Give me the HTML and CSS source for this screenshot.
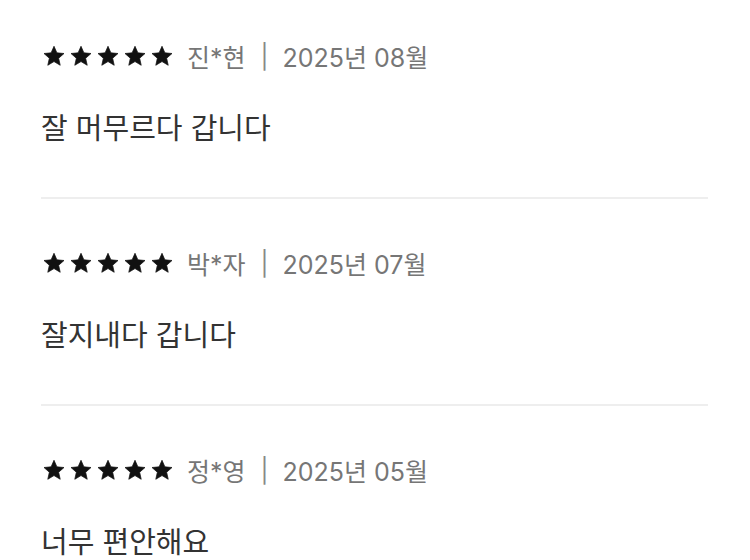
FILE: index.html
```html
<!DOCTYPE html>
<html lang="ko">
<head>
  <meta charset="UTF-8">
  <title>리뷰</title>
  <link rel="stylesheet" href="styles.css">
</head>
<body>
  <svg width="0" height="0" class="defs">
    <symbol id="star" viewBox="1.2 1.2 21.6 21.6">
      <path d="M12 1.5l3.1 7.1 7.7.7-5.8 5.1 1.7 7.6L12 18l-6.7 4 1.7-7.6-5.8-5.1 7.7-.7z" stroke="#111" stroke-width="0.8" stroke-linejoin="round"/>
    </symbol>
  </svg>

  <div class="reviews">
    <div class="review">
      <div class="meta">
        <span class="stars">
          <svg class="star"><use href="#star"/></svg>
          <svg class="star"><use href="#star"/></svg>
          <svg class="star"><use href="#star"/></svg>
          <svg class="star"><use href="#star"/></svg>
          <svg class="star"><use href="#star"/></svg>
        </span>
        <span class="name">진*현</span>
        <span class="bar">|</span>
        <span class="date">2025년 08월</span>
      </div>
      <p class="text">잘 머무르다 갑니다</p>
    </div>

    <div class="review">
      <div class="meta">
        <span class="stars">
          <svg class="star"><use href="#star"/></svg>
          <svg class="star"><use href="#star"/></svg>
          <svg class="star"><use href="#star"/></svg>
          <svg class="star"><use href="#star"/></svg>
          <svg class="star"><use href="#star"/></svg>
        </span>
        <span class="name">박*자</span>
        <span class="bar">|</span>
        <span class="date">2025년 07월</span>
      </div>
      <p class="text">잘지내다 갑니다</p>
    </div>

    <div class="review">
      <div class="meta">
        <span class="stars">
          <svg class="star"><use href="#star"/></svg>
          <svg class="star"><use href="#star"/></svg>
          <svg class="star"><use href="#star"/></svg>
          <svg class="star"><use href="#star"/></svg>
          <svg class="star"><use href="#star"/></svg>
        </span>
        <span class="name">정*영</span>
        <span class="bar">|</span>
        <span class="date">2025년 05월</span>
      </div>
      <p class="text">너무 편안해요</p>
    </div>
  </div>
</body>
</html>
```

FILE: styles.css
```css
html, body, p {
  margin: 0;
  padding: 0;
}
body {
  background: #fff;
  font-family: "Noto Sans CJK KR", "Noto Sans", sans-serif;
  color: #333;
  overflow: hidden;
}
.defs {
  position: absolute;
}
/* 스크롤된 상태라 첫 리뷰 위쪽이 살짝 잘려 있음 */
.reviews {
  margin-top: -8px;
  padding: 0 42px 0 41px;
}
.review {
  box-sizing: border-box;
  height: 207px;
  padding-top: 46px;
  border-bottom: 2px solid #eeeeee;
}
.meta {
  height: 36px;
  display: flex;
  align-items: center;
  font-family: Inter, "Noto Sans CJK KR", sans-serif;
  font-size: 25px;
  color: #767676;
}
.stars {
  display: flex;
  gap: 7px;
  margin-left: 3px;
}
.star {
  width: 20px;
  height: 20px;
  fill: #111;
}
.name {
  margin-left: 15px;
}
.bar {
  margin: 0 14px 0 15px;
  font-size: 24px;
  color: #888;
}
.text {
  margin-top: 32px;
  font-size: 29px;
  line-height: 40px;
  color: #333;
}
```
